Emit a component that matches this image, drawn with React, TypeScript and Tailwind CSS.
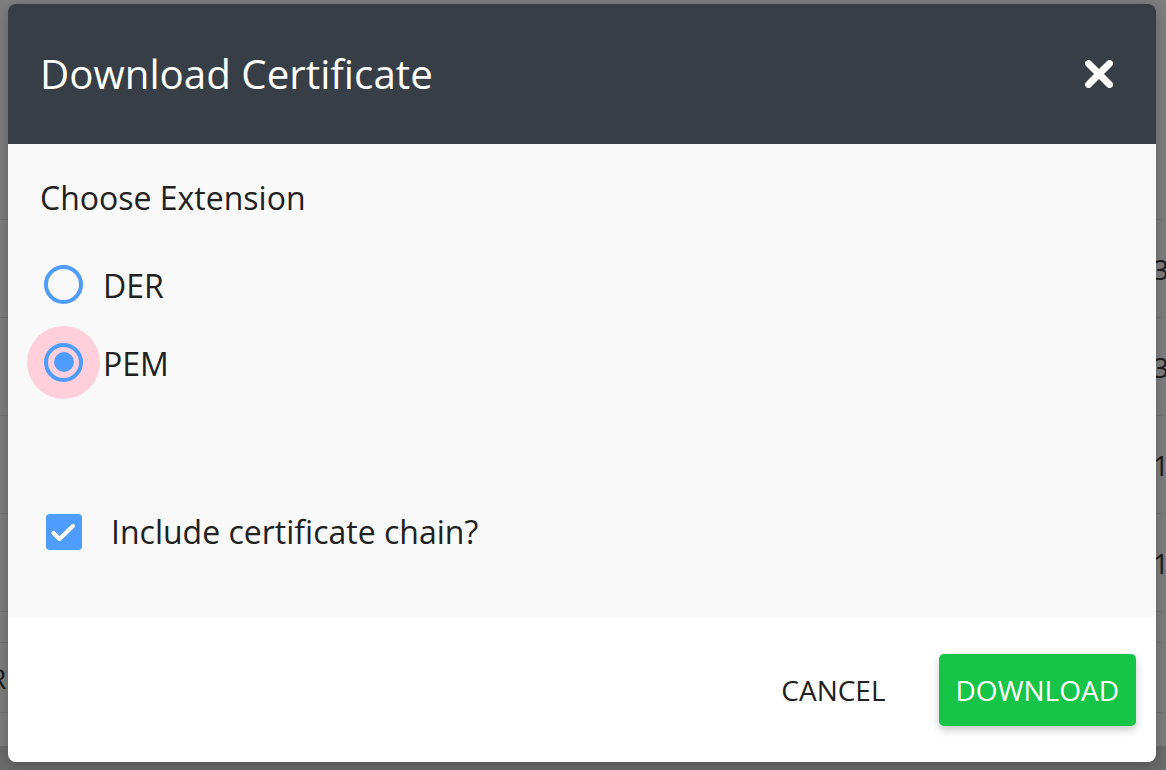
const font = { fontFamily: '"Open Sans", "Noto Sans", sans-serif' };

const rows = ["3", "3", "1", "1"];

const Radio = ({ checked }: { checked: boolean }) => (
    <div className="relative ml-[4px] h-[39px] w-[39px] shrink-0">
        {checked && <div className="absolute -inset-[17px] rounded-full bg-[#ffd0dc]" />}
        <div className="relative flex h-full w-full items-center justify-center rounded-full border-[4px] border-[#4f9cff]">
            {checked && <div className="h-[20px] w-[20px] rounded-full bg-[#4f9cff]" />}
        </div>
    </div>
);

export default function App() {
    return (
        <div className="relative h-[770px] w-full overflow-hidden bg-[#7f7f7f]" style={font}>
            {/* page behind the overlay */}
            <div className="flex flex-col text-[28px] text-[#1c1c1c]">
                <div className="h-[219px]" />
                {rows.map((d, i) => (
                    <div key={i} className="grid h-[98px] grid-cols-[1153px_1fr] items-center border-t border-[#747474] whitespace-nowrap">
                        <span />
                        <span>{d}</span>
                    </div>
                ))}
                <div className="h-[31px] border-t border-[#747474]" />
                <div className="flex h-[70px] items-center border-t border-[#747474]">
                    <span className="-ml-[11px]">R</span>
                </div>
                <div className="h-[34px] border-t border-[#747474]" />
                <div className="h-[40px] bg-[#6c6c6c]" />
            </div>

            {/* dialog */}
            <div className="absolute inset-0 pl-[8px] pt-[4px]">
                <div className="flex h-[758px] w-[1148px] flex-col overflow-hidden rounded-[8px] shadow-[0_4px_16px_rgba(0,0,0,0.25)]">
                    <div className="flex h-[140px] shrink-0 items-center justify-between bg-[#383e45] pl-[32px] pr-[43px]">
                        <h2 className="text-[40.3px] leading-[56px] text-white">Download Certificate</h2>
                        <svg width="28" height="28" viewBox="0 0 28 28" fill="none" stroke="white" strokeWidth="7" strokeLinecap="round">
                            <line x1="3.5" y1="3.5" x2="24.5" y2="24.5" />
                            <line x1="24.5" y1="3.5" x2="3.5" y2="24.5" />
                        </svg>
                    </div>

                    <div className="flex h-[473px] shrink-0 flex-col bg-[#f9f9f9] px-[32px] pt-[32px] text-[32px] leading-[44px] text-[#212121]">
                        <p className="h-[44px]">Choose Extension</p>
                        <div className="mt-[25px] flex h-[78px] items-center">
                            <Radio checked={false} />
                            <span className="ml-[20px] mt-[3px]">DER</span>
                        </div>
                        <div className="flex h-[78px] items-center">
                            <Radio checked={true} />
                            <span className="ml-[20px] mt-[3px]">PEM</span>
                        </div>
                        <div className="mt-[92px] flex h-[78px] items-center">
                            <div className="ml-[6px] flex h-[36px] w-[36px] shrink-0 items-center justify-center rounded-[4px] bg-[#4f9cff]">
                                <svg width="36" height="36" viewBox="0 0 36 36" fill="none" stroke="white" strokeWidth="4.2" strokeLinecap="round" strokeLinejoin="round">
                                    <polyline points="7.5,19 13.5,25 27,12" />
                                </svg>
                            </div>
                            <span className="ml-[29px]">Include certificate chain?</span>
                        </div>
                    </div>

                    <div className="flex flex-1 items-center justify-end gap-[36px] bg-white pr-[20px]">
                        <button className="h-[72px] px-[17px] text-[28px] text-[#212121]">CANCEL</button>
                        <button className="h-[72px] rounded-[5px] bg-[#16c447] px-[17px] text-[28px] text-white shadow-[0_4px_8px_rgba(0,0,0,0.22)]">DOWNLOAD</button>
                    </div>
                </div>
            </div>
        </div>
    );
}
